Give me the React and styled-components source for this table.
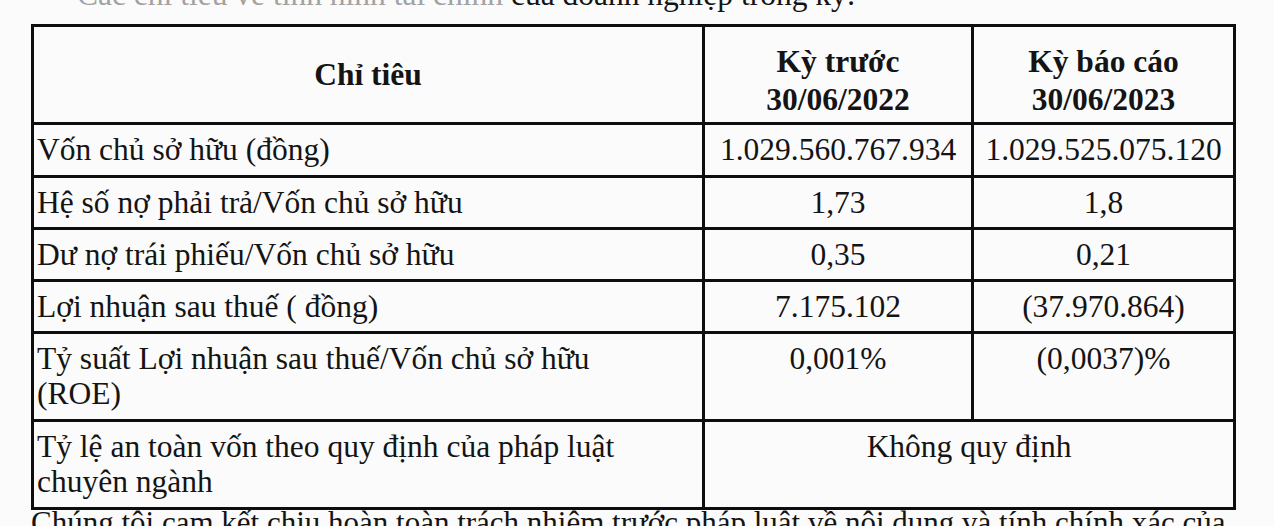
import React from "react";
import styled, { createGlobalStyle } from "styled-components";

const Global = createGlobalStyle`
  html, body { margin: 0; padding: 0; background: #fbfbfb; }
  body {
    font-family: "Liberation Serif", "Times New Roman", "DejaVu Serif", serif;
    color: #141414;
    overflow: hidden;
  }
`;

const Page = styled.div`
  width: 1274px;
  height: 526px;
  overflow: hidden;
  box-sizing: border-box;
  padding-left: 31px;
  background: #fbfbfb;
`;

const Lead = styled.p`
  margin: -23px 0 0 0;
  padding-left: ${(p) => p.$indent}px;
  font-size: 31.5px;
  line-height: 36px;
  white-space: nowrap;
`;

const Faded = styled.span`
  color: #a2a2a2;
`;

const Table = styled.table`
  border-collapse: collapse;
  table-layout: fixed;
  width: 1202px;
  margin-top: 11px;
  font-size: 31.5px;
  line-height: 35px;
`;

const Col = styled.col`
  width: ${(p) => p.$w}px;
`;

const Row = styled.tr`
  height: ${(p) => p.$h}px;
`;

const Head = styled.th`
  border: 3px solid #0e0e0e;
  font-weight: 700;
  text-align: center;
  vertical-align: middle;
  padding: ${(p) => p.$drop || 0}px 4px 0;
  line-height: 38px;
`;

const Cell = styled.td`
  border: 3px solid #0e0e0e;
  text-align: ${(p) => (p.$center ? "center" : "left")};
  vertical-align: top;
  padding: 7px 3px 3px;
  white-space: nowrap;
`;

const Closing = styled.p`
  margin: -5px 0 0 0;
  font-size: 31px;
  line-height: 35px;
  white-space: nowrap;
`;

const rows = [
  { label: "Vốn chủ sở hữu (đồng)", a: "1.029.560.767.934", b: "1.029.525.075.120", h: 53 },
  { label: "Hệ số nợ phải trả/Vốn chủ sở hữu", a: "1,73", b: "1,8", h: 52 },
  { label: "Dư nợ trái phiếu/Vốn chủ sở hữu", a: "0,35", b: "0,21", h: 52 },
  { label: "Lợi nhuận sau thuế ( đồng)", a: "7.175.102", b: "(37.970.864)", h: 52 },
  { label: ["Tỷ suất Lợi nhuận sau thuế/Vốn chủ sở hữu", "(ROE)"], a: "0,001%", b: "(0,0037)%", h: 88 },
];

export default function App() {
  return (
    <Page>
      <Global />
      <Lead $indent={46}>
        <Faded>Các chỉ tiêu về tình hình tài chính </Faded>của doanh nghiệp trong kỳ:
      </Lead>
      <Table>
        <colgroup>
          <Col $w={671} />
          <Col $w={269} />
          <Col $w={262} />
        </colgroup>
        <thead>
          <Row $h={98}>
            <Head>Chỉ tiêu</Head>
            <Head $drop={12}>
              Kỳ trước
              <br />
              30/06/2022
            </Head>
            <Head $drop={12}>
              Kỳ báo cáo
              <br />
              30/06/2023
            </Head>
          </Row>
        </thead>
        <tbody>
          {rows.map((r, i) => (
            <Row key={i} $h={r.h}>
              <Cell>
                {Array.isArray(r.label) ? (
                  <>
                    {r.label[0]}
                    <br />
                    {r.label[1]}
                  </>
                ) : (
                  r.label
                )}
              </Cell>
              <Cell $center>{r.a}</Cell>
              <Cell $center>{r.b}</Cell>
            </Row>
          ))}
          <Row $h={88}>
            <Cell>
              Tỷ lệ an toàn vốn theo quy định của pháp luật
              <br />
              chuyên ngành
            </Cell>
            <Cell $center colSpan={2}>
              Không quy định
            </Cell>
          </Row>
        </tbody>
      </Table>
      <Closing>
        Chúng tôi cam kết chịu hoàn toàn trách nhiệm trước pháp luật về nội dung và tính chính xác của
      </Closing>
    </Page>
  );
}
